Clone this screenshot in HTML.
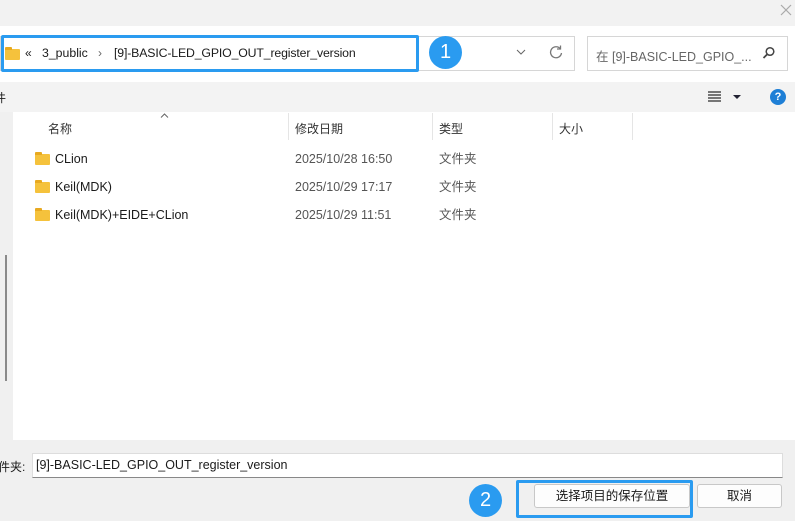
<!DOCTYPE html>
<html><head><meta charset="utf-8"><style>
*{margin:0;padding:0;box-sizing:border-box}
body{width:795px;height:521px;background:#f0f0f0;position:relative;overflow:hidden;font-family:"Liberation Sans","Noto Sans CJK SC",sans-serif;font-size:12px;color:#1a1a1a}
.a{position:absolute}
.circ{position:absolute;width:33px;height:33px;border-radius:50%;background:#2a9bf0;color:#fff;font-size:20px;text-align:center;line-height:33px}
.fold{position:absolute;width:15px;height:11px;background:#f5c23c;border-radius:1px}
.fold:before{content:"";position:absolute;left:0;top:-2px;width:7px;height:3px;background:#e8a920;border-radius:1px 1px 0 0}
.row{position:absolute;left:0;height:20px;line-height:20px;font-size:12.5px}
.gr{color:#555}
.btn{position:absolute;height:24px;border:1px solid #c8c8c8;background:#fdfdfd;border-radius:3px;text-align:center;line-height:22px;font-size:12.5px}
</style></head><body>
<div class="a" style="left:0;top:0;width:795px;height:26px;background:#f2f2f2"></div>
<svg class="a" style="left:780px;top:4px" width="12" height="12"><g stroke="#aaa" stroke-width="1.2"><line x1="1" y1="1" x2="11" y2="11"/><line x1="11" y1="1" x2="1" y2="11"/></g></svg>
<div class="a" style="left:0;top:26px;width:795px;height:56px;background:#fff"></div>
<div class="a" style="left:0;top:36px;width:575px;height:35px;border:1px solid #d6d6d6;background:#fff"></div>
<div class="a" style="left:1px;top:35px;width:418px;height:37px;border:3px solid #2a9bf0;border-radius:2px"></div>
<div class="fold" style="left:5px;top:49px"></div>
<div class="a" style="left:25px;top:46px;font-size:12px">«</div>
<div class="a" style="left:42px;top:46px;font-size:12.3px">3_public</div>
<div class="a" style="left:98px;top:46px;font-size:12px;color:#666">›</div>
<div class="a" style="left:114px;top:46px;font-size:12.3px;letter-spacing:-0.15px">[9]-BASIC-LED_GPIO_OUT_register_version</div>
<div class="circ" style="left:429px;top:36px">1</div>
<svg class="a" style="left:516px;top:49px" width="10" height="6"><polyline points="1,1 5,5 9,1" fill="none" stroke="#666" stroke-width="1"/></svg>
<svg class="a" style="left:549px;top:45px" width="14" height="14"><path d="M11.5 4 A5.5 5.5 0 1 0 12.5 8" fill="none" stroke="#777" stroke-width="1.3"/><polyline points="11.5,0.5 11.5,4 8,4" fill="none" stroke="#777" stroke-width="1.3"/></svg>
<div class="a" style="left:587px;top:36px;width:201px;height:35px;border:1px solid #d6d6d6;background:#fff"></div>
<div class="a" style="left:596px;top:46px;font-size:12.5px;color:#666">在 [9]-BASIC-LED_GPIO_...</div>
<svg class="a" style="left:762px;top:46px" width="14" height="14"><circle cx="8" cy="5.5" r="3.8" fill="none" stroke="#444" stroke-width="1.5"/><line x1="5" y1="8.5" x2="1.5" y2="12" stroke="#444" stroke-width="1.8"/></svg>
<div class="a" style="left:0;top:82px;width:795px;height:30px;background:#f3f3f3"></div>
<div class="a" style="left:-6px;top:89px;font-size:12px">件</div>
<svg class="a" style="left:708px;top:91px" width="36" height="12"><g stroke="#222" stroke-width="1.2"><line x1="0" y1="1" x2="13" y2="1"/><line x1="0" y1="4" x2="13" y2="4"/><line x1="0" y1="7" x2="13" y2="7"/><line x1="0" y1="10" x2="13" y2="10"/></g><polygon points="25,4 33,4 29,8" fill="#223"/></svg>
<div class="a" style="left:770px;top:89px;width:16px;height:16px;border-radius:50%;background:#1e7fd6;color:#fff;font-size:11px;font-weight:bold;text-align:center;line-height:16px">?</div>
<div class="a" style="left:13px;top:112px;width:782px;height:328px;background:#fff"></div>
<div class="a" style="left:5px;top:255px;width:2px;height:126px;background:#8a8a8a"></div>
<svg class="a" style="left:160px;top:113px" width="9" height="5"><polyline points="1,4.5 4.5,1 8,4.5" fill="none" stroke="#666" stroke-width="1"/></svg>
<div class="a" style="left:48px;top:120px;font-size:12px;color:#333">名称</div>
<div class="a" style="left:295px;top:120px;font-size:12px;color:#333">修改日期</div>
<div class="a" style="left:439px;top:120px;font-size:12px;color:#333">类型</div>
<div class="a" style="left:559px;top:120px;font-size:12px;color:#333">大小</div>
<div class="a" style="left:288px;top:113px;width:1px;height:27px;background:#e5e5e5"></div>
<div class="a" style="left:432px;top:113px;width:1px;height:27px;background:#e5e5e5"></div>
<div class="a" style="left:552px;top:113px;width:1px;height:27px;background:#e5e5e5"></div>
<div class="a" style="left:632px;top:113px;width:1px;height:27px;background:#e5e5e5"></div>
<div class="fold" style="left:35px;top:154px"></div>
<div class="row" style="left:55px;top:149px">CLion</div>
<div class="row gr" style="left:295px;top:149px">2025/10/28 16:50</div>
<div class="row gr" style="left:439px;top:149px">文件夹</div>
<div class="fold" style="left:35px;top:182px"></div>
<div class="row" style="left:55px;top:177px">Keil(MDK)</div>
<div class="row gr" style="left:295px;top:177px">2025/10/29 17:17</div>
<div class="row gr" style="left:439px;top:177px">文件夹</div>
<div class="fold" style="left:35px;top:210px"></div>
<div class="row" style="left:55px;top:205px">Keil(MDK)+EIDE+CLion</div>
<div class="row gr" style="left:295px;top:205px">2025/10/29 11:51</div>
<div class="row gr" style="left:439px;top:205px">文件夹</div>
<div class="a" style="left:-2px;top:458px;font-size:12px">件夹:</div>
<div class="a" style="left:32px;top:453px;width:751px;height:25px;background:#fff;border:1px solid #ddd;border-bottom-color:#888"></div>
<div class="a" style="left:36px;top:458px;font-size:12.5px">[9]-BASIC-LED_GPIO_OUT_register_version</div>
<div class="circ" style="left:469px;top:484px">2</div>
<div class="btn" style="left:534px;top:484px;width:156px">选择项目的保存位置</div>
<div class="a" style="left:516px;top:480px;width:177px;height:38px;border:3px solid #2a9bf0;border-radius:2px"></div>
<div class="btn" style="left:697px;top:484px;width:85px">取消</div>
</body></html>
